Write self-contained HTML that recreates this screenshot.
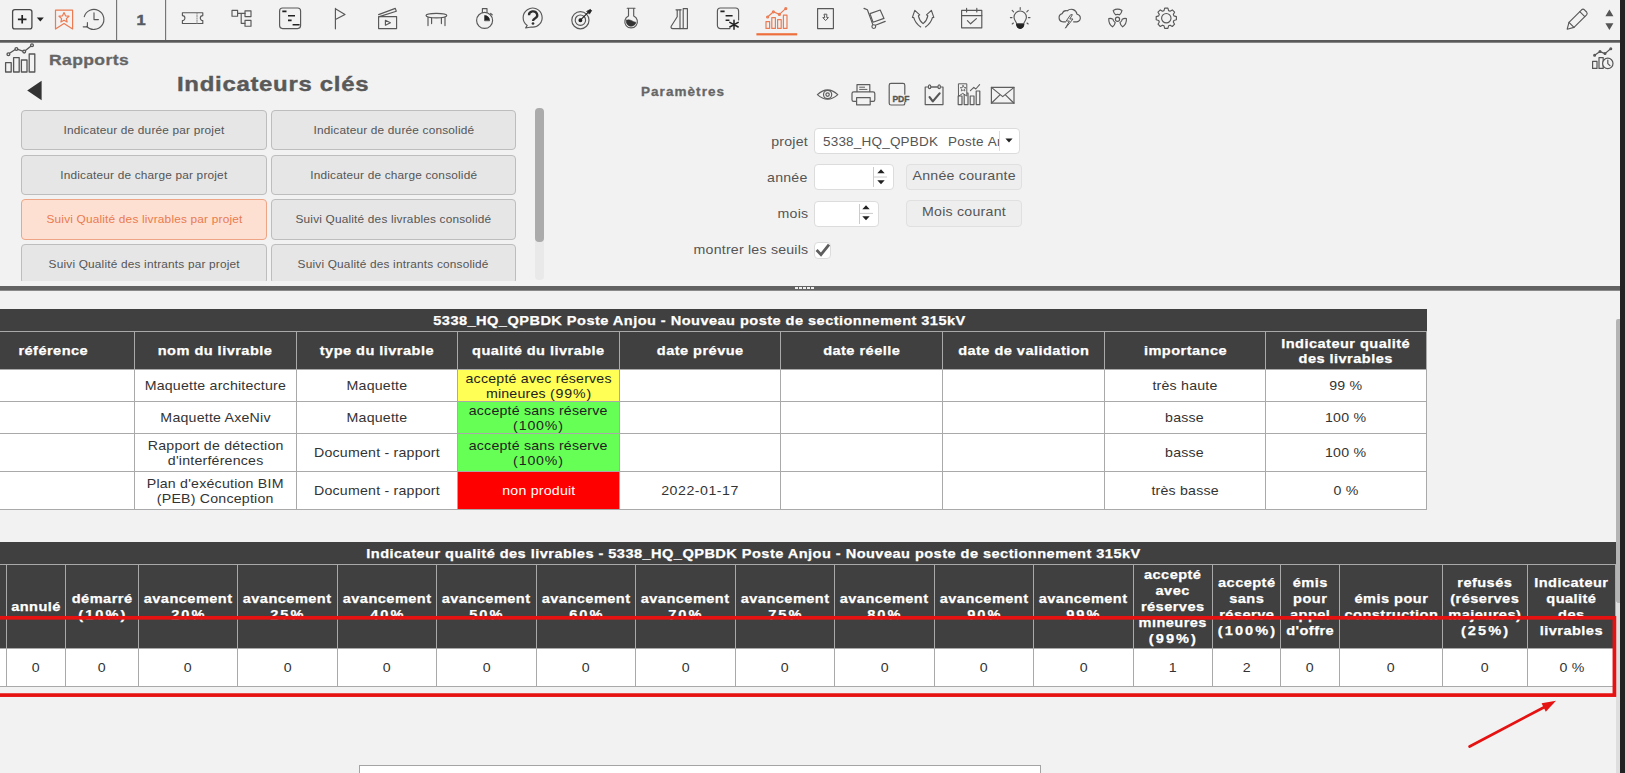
<!DOCTYPE html>
<html lang="fr">
<head>
<meta charset="utf-8">
<title>Rapports - Indicateurs clés</title>
<style>
*{box-sizing:border-box;margin:0;padding:0}
html,body{width:1625px;height:773px;overflow:hidden;background:#f2f2f2}
body{position:relative;font-family:"Liberation Sans",sans-serif;font-size:13.5px;color:#555;letter-spacing:.55px}
.abs{position:absolute}
#rightbar{left:1620px;top:0;width:5px;height:773px;background:#222}
#topline{left:0;top:40px;width:1620px;height:3px;background:linear-gradient(#5a5a5a 0 2px,#858585 2px 3px)}
.vsep{top:0;width:1px;height:40px;background:#767676;box-shadow:1px 0 0 #dedede}
#icons{left:0;top:0}
#one{left:121px;top:9.6px;-webkit-text-stroke:.5px #555b64;width:40px;text-align:center;font-weight:bold;font-size:15.2px;line-height:20px;color:#555b64;letter-spacing:0;transform:scaleX(1.08)}
#rapports{left:49px;top:49.5px;font-weight:bold;font-size:15.5px;line-height:20px;letter-spacing:.35px;color:#656565;white-space:nowrap;-webkit-text-stroke:.3px #656565;transform:scaleX(1.13);transform-origin:0 0}
#indic{left:176.6px;top:70px;font-weight:bold;font-size:21px;line-height:28px;letter-spacing:.62px;color:#595959;white-space:nowrap;-webkit-text-stroke:.4px #595959;transform:scaleX(1.14);transform-origin:0 0}
#btnwrap{left:0;top:106px;width:530px;height:175px;overflow:hidden}
.btn{position:absolute;width:246px;height:40px;border:1px solid #bdbdbd;border-radius:4px;background:#e6e6e6;color:#555;font-size:11.2px;letter-spacing:.17px;line-height:38px;text-align:center;white-space:nowrap}
.btn.sel{background:#fee0d3;border-color:#eda585;color:#e97b4e}
#sbthumb{left:535px;top:108px;width:9px;height:134px;border-radius:4px;background:#ababab}
#sbtrack{left:535px;top:108px;width:9px;height:172px;border-radius:4px;background:#e9e9e9}
#param{left:641px;top:82.5px;font-weight:bold;font-size:13.5px;line-height:18px;letter-spacing:1.05px;color:#666;white-space:nowrap;-webkit-text-stroke:.3px #666}
.lbl{width:200px;text-align:right;font-size:13.5px;line-height:18px;color:#555;white-space:nowrap;letter-spacing:.2px}
.inp{background:#fff;border:1px solid #dcdcdc;border-radius:4px}
.cbtn{background:#eeeeee;border:1px solid #e0e0e0;border-radius:4px;text-align:center;font-size:13.5px;line-height:22px;color:#555;white-space:nowrap;letter-spacing:.22px}
#split{left:0;top:286px;width:1620px;height:5px;background:linear-gradient(#626262 0 4px,#8a8a8a 4px 5px)}
#grip{left:795px;top:287px;width:19px;height:2px;background:repeating-linear-gradient(90deg,#eee 0 3px,#5c5c5c 3px 4px)}
table{border-collapse:collapse;table-layout:fixed;position:absolute}
td,th{border:1px solid #a9a9a9;text-align:center;vertical-align:middle;padding:0;overflow:hidden}
th{background:#404040;color:#fff;font-weight:bold;font-size:13.5px;letter-spacing:.42px;-webkit-text-stroke:.25px #fff}
.s{display:inline-block}
th .s{transform:scaleX(1.08)}
td .s{transform:scaleX(1.05)}
.btn .s{transform:scaleX(1.06)}
.cbtn .s{transform:scaleX(1.05)}
.lbl .s{transform:scaleX(1.05);transform-origin:100% 50%}
th .n{letter-spacing:1.9px;margin-right:-1.4px}
td .n{letter-spacing:.8px;margin-right:-.6px}
td{background:#fff;color:#333;font-size:13.5px;letter-spacing:.2px;line-height:15px}
#t1{left:-28px;top:309px;width:1454px}
#t1 th{line-height:15px}
#t2{left:-109px;top:542px;width:1725px}
#t2 th{line-height:16px;padding-top:1.5px}
#t2 th.ttl{padding-top:0}
.ttl{height:22px;line-height:20px !important;border-color:#404040 #404040 #a9a9a9 #404040}
#vthumb{left:1616px;top:319px;width:4px;height:284px;background:#b4b4b4;border-radius:2px 0 0 2px}
#vtrack{left:1616px;top:603px;width:4px;height:170px;background:#dedede}
#botbox{left:359px;top:765px;width:682px;height:12px;background:#fff;border:1px solid #a4a4a4}
#anno{left:0;top:0;pointer-events:none}
</style>
</head>
<body>
<div class="abs" id="topline"></div>
<div class="abs vsep" style="left:116px"></div>
<div class="abs vsep" style="left:165px"></div>
<div class="abs" id="one">1</div>

<svg class="abs" id="icons" width="1620" height="270" viewBox="0 0 1620 270" fill="none" stroke="#585858" stroke-width="1.15" stroke-linecap="round" stroke-linejoin="round">
<!-- plus box -->
<rect x="12.6" y="9.6" width="19.3" height="19.3" rx="2.2" stroke="#484848" stroke-width="1.3"/>
<path d="M22.2,15 V23.6 M17.9,19.3 H26.5" stroke="#222" stroke-width="1.7" stroke-linecap="butt"/>
<path d="M36.8,17.4 H43.8 L40.3,21.6 Z" fill="#222" stroke="none"/>
<!-- bookmark -->
<g stroke="#ec7a52" stroke-width="1.2">
<path d="M55.5,10.2 H72.6 V29 L64,23.6 L55.5,29 Z"/>
<path d="M64,12.6 L65.5,15.8 L69,16.2 L66.4,18.6 L67.1,22 L64,20.3 L60.9,22 L61.6,18.6 L59,16.2 L62.5,15.8 Z"/>
</g>
<!-- history -->
<path d="M86.6,26.3 A10,10 0 1 0 84.3,16.6"/>
<path d="M83.2,26.8 H87.4 V22.6" />
<path d="M94,12.8 V19.6 H98.4"/>
<!-- ticket -->
<path d="M182.4,12.7 H202.8 V15.6 A2.5,2.5 0 0 0 202.8,20.6 V23.5 H182.4 V20.6 A2.5,2.5 0 0 0 182.4,15.6 Z"/>
<path d="M197,13 V23.4" stroke-dasharray="1.2 1.2" stroke-width="1" stroke="#888"/>
<!-- tree -->
<rect x="232" y="10.4" width="5.6" height="5.8"/><rect x="245" y="10.8" width="6" height="5.8"/><rect x="245" y="20.4" width="6" height="5.8"/>
<path d="M237.6,13.4 H245 M241.2,13.4 V23.3 H245"/>
<!-- gantt -->
<rect x="279.6" y="8" width="21" height="20.6" rx="3"/>
<path d="M282.3,11.4 H286.5 M288,15.8 H295 M288,20.4 H291.6 M292.6,24.8 H299.6" stroke="#222" stroke-width="1.6" stroke-linecap="butt"/>
<!-- flag -->
<path d="M335.4,8.4 V28.8 M335.4,8.8 L345,14.4 L335.4,19.6"/>
<!-- clapper -->
<rect x="378.6" y="16.6" width="18" height="12"/>
<path d="M378.6,14.6 L395.3,8.4 L396.3,11.2 L379.4,16.6"/>
<path d="M385.4,20.2 L390.4,22.7 L385.4,25.2 Z"/>
<!-- table -->
<ellipse cx="436.4" cy="15.6" rx="10.4" ry="2.3"/>
<path d="M428,17.6 V25.6 M445,17.6 V25.6 M431.6,18 V23.6 M441.4,18 V23.6"/>
<!-- stopwatch -->
<circle cx="484.6" cy="20.4" r="8"/>
<path d="M482.4,12.6 V8.6 H487 V12.6 M490.6,13.4 L492.2,14.8"/>
<path d="M484.6,20.4 V15.4 A5,5 0 0 1 489.6,20.4 Z" fill="#222" stroke="#222" stroke-width=".6"/>
<!-- help -->
<path d="M527.2,25.4 A9.5,9.5 0 1 1 531.2,27 L525.6,28 Z"/>
<path d="M529,15.2 A4.1,3.7 0 1 1 535.2,18.2 C533.6,19.2 533,19.6 533,21" stroke="#2e2e2e" stroke-width="2.3" stroke-linecap="butt"/>
<circle cx="533" cy="23.5" r="1.35" fill="#2e2e2e" stroke="none"/>
<!-- target -->
<circle cx="580.4" cy="20.2" r="8.6"/><circle cx="580.4" cy="20.2" r="5.2"/><circle cx="580.4" cy="20.2" r="1.4" fill="#222" stroke="#222"/>
<path d="M580.4,20.2 L589.4,11.2" stroke="#222"/>
<path d="M587,11.2 L590.4,9.4 L591.6,10.6 L589.6,13.8 Z" fill="#222" stroke="#222" stroke-width=".8"/>
<!-- flask round -->
<path d="M627.2,8.2 H635 M628.5,8.2 V15.9 A6.3,6.3 0 1 0 633.7,15.9 V8.2"/>
<path d="M626.3,20.2 Q628.6,19 631.2,20.4 T636,22.4 A4.9,4.9 0 0 1 626.3,20.2 Z" fill="#333" stroke="#333" stroke-width=".5"/>
<!-- flask + ruler -->
<path d="M676,9.8 H681.2 M677.2,9.8 V16.8 L671.2,26.2 Q670.4,28.4 672.8,28.6 H682.8"/>
<path d="M680,9.8 V28.6"/>
<path d="M683.2,8.6 H687.4 V28.6 H683.2 Z"/>
<!-- gantt star -->
<path d="M730,28.6 H720.4 A3,3 0 0 1 717.4,25.6 V11 A3,3 0 0 1 720.4,8 H735.6 A3,3 0 0 1 738.6,11 V20"/>
<path d="M720.4,11.4 H724.6 M725.6,15.8 H732.6 M725.6,20.2 H729.4" stroke="#222" stroke-width="1.6" stroke-linecap="butt"/>
<path d="M734,20.2 V29.2 M729.8,22.4 L738.2,27 M738.2,22.4 L729.8,27" stroke="#222" stroke-width="1.5"/>
<!-- chart (selected) -->
<g stroke="#ec7a52" stroke-width="1.2">
<rect x="766" y="21.6" width="3.6" height="6.8"/><rect x="771.8" y="17.6" width="3.6" height="10.8"/><rect x="777.6" y="19.6" width="3.6" height="8.8"/><rect x="783.4" y="15.2" width="3.6" height="13.2"/>
<path d="M767.6,17 L773.4,11.8 L779.4,14.4 L785.6,8.6"/>
<circle cx="767.6" cy="17" r="1"/><circle cx="773.4" cy="11.8" r="1"/><circle cx="779.4" cy="14.4" r="1"/><circle cx="785.8" cy="8.6" r="1"/>
</g>
<rect x="756.4" y="33.2" width="40.8" height="2.2" fill="#ee6f3c" stroke="none"/>
<!-- download doc -->
<rect x="817.6" y="8.6" width="15.8" height="20"/>
<path d="M824.4,14.2 H826.8 V17.6 H828.4 L825.6,20.6 L822.8,17.6 H824.4 Z" stroke-width="1"/>
<!-- trolley -->
<path d="M864,8.4 L867.4,9.8 L872.8,24.6"/>
<path d="M873,22.2 L870,13.6 L880.2,10 L884,18.4 Z"/>
<path d="M875.4,25.2 L885.2,21.4"/>
<circle cx="873.8" cy="26.6" r="1.9"/>
<!-- V arrows -->
<path d="M920.7,27 C916.5,24 914.5,20.5 913.8,17.6 L912.4,17.4 L914.8,10.4 L919.7,14.9 L918.4,15.8 C919,19 920.8,21.8 923.1,23.6 C925.4,21.8 927.2,19 927.8,15.8 L926.5,14.9 L931.4,10.4 L933.8,17.4 L932.4,17.6 C931.7,20.5 929.7,24 925.5,27"/>
<!-- calendar check -->
<rect x="961.6" y="10.4" width="20.2" height="17.4"/>
<path d="M961.6,15.6 H981.8 M966.6,8.4 V12 M976.8,8.4 V12 M967.4,20.6 L970.6,23.8 L976.4,18.6"/>
<!-- bulb -->
<path d="M1016.6,23.8 C1016.4,21.6 1014,20.4 1014,17.2 A6.2,6.2 0 0 1 1026.4,17.2 C1026.4,20.4 1024,21.6 1023.8,23.8 Z"/>
<path d="M1016.6,24.2 H1023.8 A3.6,4.2 0 0 1 1016.6,24.2 Z" fill="#222" stroke="#222"/>
<path d="M1020.2,7.6 V9.6 M1012.2,10.4 L1013.6,11.8 M1028.2,10.4 L1026.8,11.8 M1010.4,17.6 H1012 M1028.4,17.6 H1030 M1012.2,24 L1013.4,23 M1028.2,24 L1027,23" stroke-width="1.1"/>
<!-- cloud lightning -->
<path d="M1065.6,21.8 H1062.6 A4.2,4.2 0 0 1 1062.2,13.6 A4.4,4.4 0 0 1 1067.4,10.8 A5.8,5.8 0 0 1 1077,14.2 A3.8,3.8 0 0 1 1076,21.8 H1073.6"/>
<path d="M1070.4,15 L1066.2,21 H1069.4 L1065.4,28.2 L1073,19 H1069.8 L1072.2,15 Z" stroke-width="1"/>
<!-- radioactive -->
<circle cx="1117.5" cy="19.2" r="2.1"/>
<path d="M1113.2,10.4 Q1117.6,8 1122,10.4 Q1121.4,13.4 1119.6,14.8 Q1117.6,13.8 1115.6,14.8 Q1113.8,13.4 1113.2,10.4 Z"/>
<path d="M1108.8,18.6 Q1108.4,24 1112.6,26.8 Q1114.8,25 1115.2,22.6 Q1113.2,21.4 1113,19.2 Q1110.8,18 1108.8,18.6 Z"/>
<path d="M1126.4,18.6 Q1126.8,24 1122.6,26.8 Q1120.4,25 1120,22.6 Q1122,21.4 1122.2,19.2 Q1124.4,18 1126.4,18.6 Z"/>
<!-- gear -->
<circle cx="1166.3" cy="18.2" r="4.7"/>
<path d="M1164.0,10.6 L1164.7,8.1 L1167.9,8.1 L1168.6,10.6 L1170.1,11.2 L1172.3,9.9 L1174.6,12.2 L1173.3,14.4 L1173.9,15.9 L1176.4,16.6 L1176.4,19.8 L1173.9,20.5 L1173.3,22.0 L1174.6,24.2 L1172.3,26.5 L1170.1,25.2 L1168.6,25.8 L1167.9,28.3 L1164.7,28.3 L1164.0,25.8 L1162.5,25.2 L1160.3,26.5 L1158.0,24.2 L1159.3,22.0 L1158.7,20.5 L1156.2,19.8 L1156.2,16.6 L1158.7,15.9 L1159.3,14.4 L1158.0,12.2 L1160.3,9.9 L1162.5,11.2 Z"/>
<!-- pencil -->
<path d="M1567.2,29.2 L1569,22.4 L1581.6,9.8 Q1583,8.6 1584.4,9.8 L1586.6,12 Q1587.8,13.4 1586.6,14.8 L1574,27.4 Z"/>
<path d="M1569,22.4 L1574,27.4 M1579.8,11.6 L1584.8,16.6"/>
<!-- up/down -->
<path d="M1605.4,16.2 H1613.4 L1609.4,9.4 Z M1605.4,23.2 H1613.4 L1609.4,30 Z" fill="#555" stroke="none"/>
<!-- rapports icon -->
<g stroke="#555" stroke-width="1.3">
<rect x="5.6" y="62.6" width="5.6" height="9.4"/><rect x="13.6" y="57.6" width="5.6" height="14.4"/><rect x="21.4" y="60" width="5.6" height="12"/><rect x="29.2" y="54" width="5.6" height="18"/>
<path d="M8.4,54 L16.4,48.8 L24.2,51.6 L32,45.2"/>
<circle cx="8.4" cy="54.2" r="1.4" fill="#f2f2f2"/><circle cx="16.4" cy="49" r="1.4" fill="#f2f2f2"/><circle cx="24.2" cy="51.6" r="1.4" fill="#f2f2f2"/><circle cx="32" cy="45.2" r="1.4" fill="#f2f2f2"/>
</g>
<!-- left triangle -->
<path d="M27.2,90.4 L41.6,80.8 V100.2 Z" fill="#333" stroke="none"/>
<!-- right icon chart+clock -->
<g stroke="#555" stroke-width="1.2">
<rect x="1592.6" y="61.4" width="4.4" height="7"/><rect x="1599" y="57.6" width="4.2" height="10.8"/>
<circle cx="1607.8" cy="63.4" r="5.2" fill="#f2f2f2"/>
<path d="M1607.8,60.2 V63.6 L1610,65.6"/>
<path d="M1594.6,55.2 L1600,51.6 L1605,53.6 L1610.6,48.8"/>
<circle cx="1594.6" cy="55.2" r=".9"/><circle cx="1600" cy="51.6" r=".9"/><circle cx="1605" cy="53.6" r=".9"/><circle cx="1610.8" cy="48.8" r=".9"/>
</g>
<!-- params icons -->
<g stroke="#5e5e5e" stroke-width="1.2">
<!-- eye -->
<path d="M817.4,94.6 Q827.6,85.4 837.8,94.6 Q827.6,103.8 817.4,94.6 Z"/>
<circle cx="827.6" cy="94.6" r="4.1"/><circle cx="827.6" cy="94.6" r="1.7"/>
<!-- printer -->
<path d="M857,91.6 V84.6 H869.8 V91.6"/>
<path d="M856.4,101.4 H853.6 Q852,101.4 852,99.8 V93.6 Q852,91.8 853.8,91.8 H873 Q874.8,91.8 874.8,93.6 V99.8 Q874.8,101.4 873.2,101.4 H870.4"/>
<path d="M856.6,97.6 H870.2 V104.8 H856.6 Z"/>
<path d="M859.6,87.2 H864.6 M859.6,89.4 H867" stroke-width="1"/>
<!-- pdf -->
<path d="M904.8,94.2 V85.2 Q904.8,83.4 903,83.4 H891 Q889.2,83.4 889.2,85.2 V103.2 Q889.2,105 891,105 H903 Q904.8,105 904.8,103.4 V102.6"/>
<!-- calendar check -->
<rect x="925.2" y="87" width="17.8" height="17.6"/>
<path d="M931,87 H937.6"/><ellipse cx="929.6" cy="86.8" rx="1.2" ry="1.9" fill="#f2f2f2"/><ellipse cx="939.2" cy="86.8" rx="1.2" ry="1.9" fill="#f2f2f2"/>
<path d="M929.6,97.2 L932.8,101.4 L939.6,93.4" stroke="#555" stroke-width="2.2"/>
<!-- chart star -->
<rect x="958.2" y="96" width="3.8" height="8.6"/><rect x="964.2" y="93" width="3.8" height="11.6"/><rect x="970.2" y="96" width="3.8" height="8.6"/><rect x="976.2" y="91" width="3.6" height="13.6"/>
<path d="M958.8,83.8 H966.8 V96 L962.8,93.4 L958.8,96 Z" stroke-width="1" fill="#f2f2f2"/>
<path d="M963.1,85.4 L964,87.4 L966,87.6 L964.5,89 L964.9,91 L963.1,90 L961.3,91 L961.7,89 L960.2,87.6 L962.2,87.4 Z" stroke-width=".8"/>
<path d="M970.4,90.6 L973.8,87.4 L975.8,89 L979.6,84.6" stroke-width="1.1"/>
<!-- envelope -->
<rect x="991.4" y="87.4" width="22.6" height="15.8"/>
<path d="M991.4,87.4 L1002.7,96.6 L1014,87.4 M991.4,103.2 L1000.2,94.6 M1014,103.2 L1005.2,94.6"/>
</g>
<text x="892.4" y="102" font-family="Liberation Sans, sans-serif" font-weight="bold" font-size="8.6" fill="#555" stroke="#555" stroke-width=".3" letter-spacing="0" dy="-.5">PDF</text>
</svg>
<!--ICONS-->
<div class="abs" id="rapports">Rapports</div>
<div class="abs" id="indic">Indicateurs clés</div>

<div class="abs" id="btnwrap">
<div class="btn" style="left:21px;top:4px"><span class="s">Indicateur de durée par projet</span></div>
<div class="btn" style="left:271px;width:245px;top:4px"><span class="s">Indicateur de durée consolidé</span></div>
<div class="btn" style="left:21px;top:49px"><span class="s">Indicateur de charge par projet</span></div>
<div class="btn" style="left:271px;width:245px;top:49px"><span class="s">Indicateur de charge consolidé</span></div>
<div class="btn sel" style="left:21px;top:93px;height:41px;line-height:39px"><span class="s">Suivi Qualité des livrables par projet</span></div>
<div class="btn" style="left:271px;width:245px;top:93px;height:41px;line-height:39px"><span class="s">Suivi Qualité des livrables consolidé</span></div>
<div class="btn" style="left:21px;top:138px"><span class="s">Suivi Qualité des intrants par projet</span></div>
<div class="btn" style="left:271px;width:245px;top:138px"><span class="s">Suivi Qualité des intrants consolidé</span></div>
</div>
<div class="abs" id="sbtrack"></div>
<div class="abs" id="sbthumb"></div>
<div class="abs" id="param">Paramètres</div>
<div class="abs lbl" style="left:608px;top:133px"><span class="s">projet</span></div>
<div class="abs inp" style="left:814px;top:128px;width:206px;height:26px"></div>
<div class="abs" style="left:823px;top:133px;width:176px;height:18px;overflow:hidden;white-space:pre;font-size:13.5px;line-height:18px;color:#555;letter-spacing:.2px;word-spacing:1px">5338_HQ_QPBDK  Poste Anjou</div>
<div class="abs" style="left:999px;top:131px;width:1px;height:20px;background:#ddd"></div>
<div class="abs lbl" style="left:608px;top:169px"><span class="s">année</span></div>
<div class="abs inp" style="left:814px;top:164px;width:80px;height:26px"></div>
<div class="abs" style="left:873px;top:167px;width:1px;height:20px;background:#ccc"></div>
<div class="abs lbl" style="left:608px;top:205px"><span class="s">mois</span></div>
<div class="abs inp" style="left:814px;top:201px;width:65px;height:26px"></div>
<div class="abs" style="left:859px;top:204px;width:1px;height:20px;background:#ccc"></div>
<div class="abs cbtn" style="left:906px;top:164px;width:116px;height:26px"><span class="s">Année courante</span></div>
<div class="abs cbtn" style="left:906px;top:200px;width:116px;height:27px"><span class="s">Mois courant</span></div>
<div class="abs lbl" style="left:608px;top:241px"><span class="s">montrer les seuils</span></div>
<div class="abs inp" style="left:814px;top:241.5px;width:17px;height:17px;border-radius:4px"></div>
<svg class="abs" style="left:0;top:0" width="1100" height="270" viewBox="0 0 1100 270" fill="none">
<!-- select arrow, spinners, check -->
<path d="M1005.4,138.4 H1012.6 L1009,142.4 Z" fill="#222" stroke="none"/>
<path d="M877.3,173.3 H884.7 L881,169.3 Z M877.3,180.2 H884.7 L881,184.2 Z" fill="#222" stroke="none"/>
<path d="M874,177 H887" stroke="#ccc" stroke-width="1"/>
<path d="M862.3,209.3 H869.7 L866,205.3 Z M862.3,216.2 H869.7 L866,220.2 Z" fill="#222" stroke="none"/>
<path d="M860,213.4 H873" stroke="#ccc" stroke-width="1"/>
<path d="M816.6,250 L821,254.6 L829,244.6" stroke="#5e5e5e" stroke-width="2.8" stroke-linecap="butt" stroke-linejoin="miter"/>
</svg>
<!--PANEL-->
<div class="abs" id="split"></div>
<div class="abs" id="grip"></div>

<table id="t1">
<colgroup><col style="width:162px"><col style="width:162px"><col style="width:161px"><col style="width:162px"><col style="width:161px"><col style="width:162px"><col style="width:162px"><col style="width:161px"><col style="width:161px"></colgroup>
<tr><th class="ttl" colspan="9"><span class="s">5338_HQ_QPBDK Poste Anjou - Nouveau poste de sectionnement 315kV</span></th></tr>
<tr style="height:38px"><th><span class="s">référence</span></th><th><span class="s">nom du livrable</span></th><th><span class="s">type du livrable</span></th><th><span class="s">qualité du livrable</span></th><th><span class="s">date prévue</span></th><th><span class="s">date réelle</span></th><th><span class="s">date de validation</span></th><th><span class="s">importance</span></th><th><span class="s">Indicateur qualité<br>des livrables</span></th></tr>
<tr style="height:32px"><td></td><td><span class="s">Maquette architecture</span></td><td><span class="s">Maquette</span></td><td style="background:#ffff55;color:#222"><span class="s">accepté avec réserves<br>mineures <span class="n">(99%)</span></span></td><td></td><td></td><td></td><td><span class="s">très haute</span></td><td><span class="s">99 %</span></td></tr>
<tr style="height:32px"><td></td><td><span class="s">Maquette AxeNiv</span></td><td><span class="s">Maquette</span></td><td style="background:#66ff55;color:#222"><span class="s">accepté sans réserve<br><span class="n">(100%)</span></span></td><td></td><td></td><td></td><td><span class="s">basse</span></td><td><span class="s">100 %</span></td></tr>
<tr style="height:38px"><td></td><td><span class="s">Rapport de détection<br>d'interférences</span></td><td><span class="s">Document - rapport</span></td><td style="background:#66ff55;color:#222"><span class="s">accepté sans réserve<br><span class="n">(100%)</span></span></td><td></td><td></td><td></td><td><span class="s">basse</span></td><td><span class="s">100 %</span></td></tr>
<tr style="height:38px"><td></td><td><span class="s">Plan d'exécution BIM<br>(PEB) Conception</span></td><td><span class="s">Document - rapport</span></td><td style="background:#ff0000;color:#fff"><span class="s">non produit</span></td><td><span class="s"><span class="n" style="letter-spacing:.5px;white-space:nowrap">2022-01-17</span></span></td><td></td><td></td><td><span class="s">très basse</span></td><td><span class="s">0 %</span></td></tr>
</table>
<table id="t2">
<colgroup><col style="width:115px"><col style="width:59px"><col style="width:73px"><col style="width:99px"><col style="width:100px"><col style="width:99px"><col style="width:100px"><col style="width:99px"><col style="width:100px"><col style="width:99px"><col style="width:100px"><col style="width:99px"><col style="width:100px"><col style="width:79px"><col style="width:68px"><col style="width:59px"><col style="width:103px"><col style="width:85px"><col style="width:88px"></colgroup>
<tr><th class="ttl" colspan="19"><span class="s">Indicateur qualité des livrables - 5338_HQ_QPBDK Poste Anjou - Nouveau poste de sectionnement 315kV</span></th></tr>
<tr style="height:84px"><th><span class="s">non<br>commencé</span></th><th><span class="s">annulé</span></th><th><span class="s">démarré<br><span class="n">(10%)</span></span></th><th><span class="s">avancement<br><span class="n">20%</span></span></th><th><span class="s">avancement<br><span class="n">25%</span></span></th><th><span class="s">avancement<br><span class="n">40%</span></span></th><th><span class="s">avancement<br><span class="n">50%</span></span></th><th><span class="s">avancement<br><span class="n">60%</span></span></th><th><span class="s">avancement<br><span class="n">70%</span></span></th><th><span class="s">avancement<br><span class="n">75%</span></span></th><th><span class="s">avancement<br><span class="n">80%</span></span></th><th><span class="s">avancement<br><span class="n">90%</span></span></th><th><span class="s">avancement<br><span class="n">99%</span></span></th><th><span class="s">accepté<br>avec<br>réserves<br>mineures<br><span class="n">(99%)</span></span></th><th><span class="s">accepté<br>sans<br>réserve<br><span class="n">(100%)</span></span></th><th><span class="s">émis<br>pour<br>appel<br>d'offre</span></th><th><span class="s">émis pour<br>construction</span></th><th><span class="s">refusés<br>(réserves<br>majeures)<br><span class="n">(25%)</span></span></th><th><span class="s">Indicateur<br>qualité<br>des<br>livrables</span></th></tr>
<tr style="height:38px"><td><span class="s">1</span></td><td><span class="s">0</span></td><td><span class="s">0</span></td><td><span class="s">0</span></td><td><span class="s">0</span></td><td><span class="s">0</span></td><td><span class="s">0</span></td><td><span class="s">0</span></td><td><span class="s">0</span></td><td><span class="s">0</span></td><td><span class="s">0</span></td><td><span class="s">0</span></td><td><span class="s">0</span></td><td><span class="s">1</span></td><td><span class="s">2</span></td><td><span class="s">0</span></td><td><span class="s">0</span></td><td><span class="s">0</span></td><td><span class="s">0 %</span></td></tr>
</table>
<!--TABLES-->
<div class="abs" id="vthumb"></div>
<div class="abs" id="vtrack"></div>
<div class="abs" id="botbox"></div>

<svg class="abs" id="anno" width="1625" height="773" viewBox="0 0 1625 773">
<rect x="-10" y="617.8" width="1624.4" height="77.3" fill="none" stroke="#e61212" stroke-width="3.7"/>
<line x1="1469.6" y1="746.5" x2="1546" y2="706.2" stroke="#e61212" stroke-width="2.7" stroke-linecap="round"/>
<path d="M1556,700.8 L1541.6,703.2 L1545.8,711.8 Z" fill="#e61212"/>
</svg>
<!--ANNO-->
<div class="abs" id="rightbar"></div>
</body>
</html>
